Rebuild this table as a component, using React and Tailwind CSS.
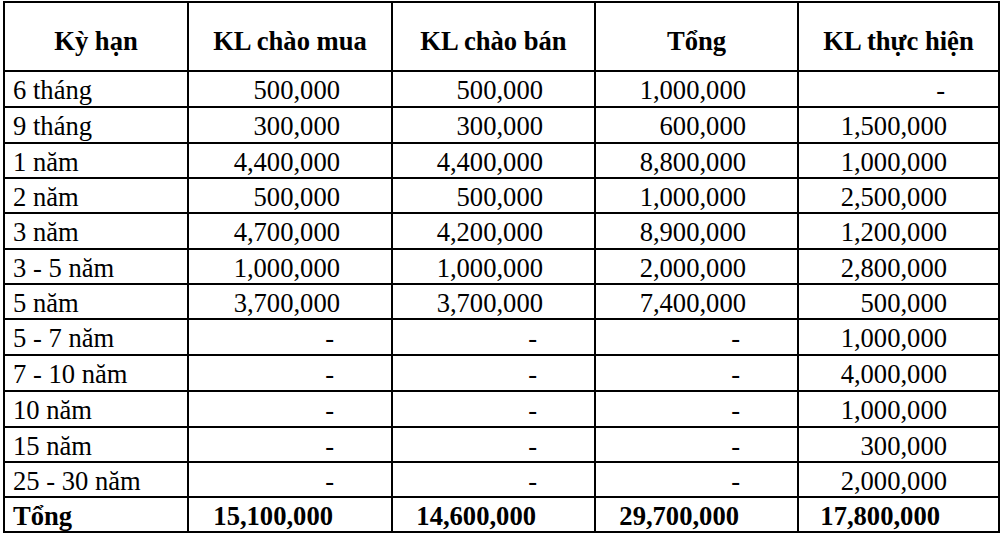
const rows = [
  ['6 tháng', '500,000', '500,000', '1,000,000', '-'],
  ['9 tháng', '300,000', '300,000', '600,000', '1,500,000'],
  ['1 năm', '4,400,000', '4,400,000', '8,800,000', '1,000,000'],
  ['2 năm', '500,000', '500,000', '1,000,000', '2,500,000'],
  ['3 năm', '4,700,000', '4,200,000', '8,900,000', '1,200,000'],
  ['3 - 5 năm', '1,000,000', '1,000,000', '2,000,000', '2,800,000'],
  ['5 năm', '3,700,000', '3,700,000', '7,400,000', '500,000'],
  ['5 - 7 năm', '-', '-', '-', '1,000,000'],
  ['7 - 10 năm', '-', '-', '-', '4,000,000'],
  ['10 năm', '-', '-', '-', '1,000,000'],
  ['15 năm', '-', '-', '-', '300,000'],
  ['25 - 30 năm', '-', '-', '-', '2,000,000'],
];

// row heights measured off the grid lines (each includes its 2px bottom line)
const heights = [
  'h-[36px]', 'h-[36px]', 'h-[35px]', 'h-[35px]', 'h-[36px]', 'h-[35px]',
  'h-[35px]', 'h-[36px]', 'h-[36px]', 'h-[36px]', 'h-[35px]', 'h-[35px]',
];

const totals = ['15,100,000', '14,600,000', '29,700,000', '17,800,000'];
const headers = ['Kỳ hạn', 'KL chào mua', 'KL chào bán', 'Tổng', 'KL thực hiện'];

const grid = 'grid grid-cols-[184px_204px_203px_203px_1fr]';
const text = "[font-family:'Liberation_Serif','Times_New_Roman',serif] text-[26.6px] leading-none text-black";

function NumCell({ value, last, bold }) {
  let pad = 'pr-[51px]';
  if (bold) pad = 'pr-[58px]';
  else if (value === '-') pad = last ? 'pr-[53px]' : 'pr-[57px]';
  return (
    <div
      className={
        text +
        ' flex items-center justify-end pt-[3px] ' +
        pad +
        (bold ? ' font-bold' : '') +
        (last ? '' : ' border-r-2 border-black')
      }
    >
      {value}
    </div>
  );
}

export default function App() {
  return (
    <div className="font-serif bg-white pl-[3px] pt-[1px] pb-[1px]">
      <div className="w-[997px] border-2 border-black bg-white font-serif">
        <div className={grid + ' h-[69px] border-b-2 border-black'}>
          {headers.map((h, i) => (
            <div
              key={h}
              className={
                text +
                ' flex items-center justify-center font-bold pt-[9px]' +
                (i < 4 ? ' border-r-2 border-black' : '')
              }
            >
              {h}
            </div>
          ))}
        </div>

        {rows.map((r, ri) => (
          <div key={r[0]} className={grid + ' border-b-2 border-black ' + heights[ri]}>
            <div className={text + ' flex items-center pl-[8px] pt-[3px] border-r-2 border-black'}>
              {r[0]}
            </div>
            {r.slice(1).map((v, i) => (
              <NumCell key={i} value={v} last={i === 3} />
            ))}
          </div>
        ))}

        <div className={grid + ' h-[33px]'}>
          <div className={text + ' flex items-center pl-[8px] pt-[3px] font-bold border-r-2 border-black'}>
            Tổng
          </div>
          {totals.map((v, i) => (
            <NumCell key={v} value={v} last={i === 3} bold />
          ))}
        </div>
      </div>
    </div>
  );
}
